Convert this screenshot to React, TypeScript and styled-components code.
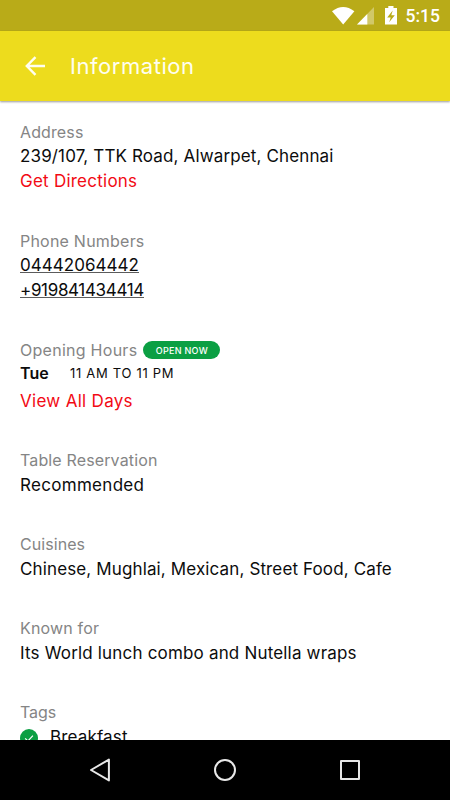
import React from 'react';
import styled, { createGlobalStyle } from 'styled-components';

const GlobalStyle = createGlobalStyle`
  * { box-sizing: border-box; }
  body { margin: 0; background: #fff; overflow: hidden; }
`;

const Screen = styled.div`
  width: 450px;
  height: 800px;
  display: flex;
  flex-direction: column;
  overflow: hidden;
  background: #fff;
  font-family: Inter, 'Liberation Sans', sans-serif;
`;

const StatusBar = styled.header`
  flex: 0 0 31px;
  display: flex;
  align-items: center;
  justify-content: flex-end;
  padding: 0 10px 0 0;
  background: #b9ab18;
  color: #fff;
`;

const StatusIcons = styled.svg`
  display: block;
  width: 66px;
  height: 31px;
  margin-right: 8px;
`;

const Clock = styled.span`
  font: 500 17.5px/29px Roboto, sans-serif;
  padding-top: 2px;
`;

const AppBar = styled.div`
  flex: 0 0 70px;
  display: flex;
  align-items: center;
  padding-left: 25px;
  background: #eddc1d;
  box-shadow: 0 1px 2px rgba(0, 0, 0, 0.4);
  z-index: 1;
`;

const BackIcon = styled.svg`
  display: block;
  width: 21px;
  height: 20px;
  margin-right: 24px;
`;

const Title = styled.h1`
  margin: 0;
  color: #fffef0;
  font-size: 22px;
  font-weight: 400;
  letter-spacing: 0.55px;
`;

const Content = styled.main`
  flex: 1;
  min-height: 0;
  overflow: hidden;
  display: flex;
  flex-direction: column;
  gap: 35px;
  padding: 19px 20px 0;
`;

const Section = styled.section`
  flex: none;
  display: flex;
  flex-direction: column;
  align-items: flex-start;
`;

const Details = styled.div`
  flex: none;
  display: flex;
  flex-direction: column;
  gap: 34px;
  margin-top: -1px;

  ${Section} {
    gap: 1px;
  }
`;

const Label = styled.h2<{ $track?: number }>`
  margin: 0;
  color: #858585;
  font-size: 16px;
  font-weight: 400;
  line-height: 24px;
  letter-spacing: ${(p) => p.$track ?? 0.12}px;
  white-space: nowrap;
`;

const Value = styled.div<{ $track?: number }>`
  color: #0c0c0c;
  font-size: 17px;
  font-weight: 400;
  line-height: 25px;
  letter-spacing: ${(p) => p.$track ?? 0.18}px;
  white-space: nowrap;
`;

const Action = styled(Value)`
  color: #f20a14;
`;

const PhoneLink = styled(Value)`
  height: 25px;
  display: flex;
  flex-direction: column;

  &::after {
    content: '';
    height: 1px;
    margin-top: -6px;
    background: #5c5c5c;
  }
`;

const LabelRow = styled.div`
  display: flex;
  align-items: center;
  height: 24px;
  gap: 6px;
`;

const OpenBadge = styled.span`
  width: 77px;
  height: 18px;
  border-radius: 9px;
  background: #0b9f43;
  color: #fff;
  font-size: 9px;
  font-weight: 500;
  line-height: 19px;
  letter-spacing: 0.28px;
  text-align: center;
`;

const HoursRow = styled.div`
  display: flex;
  align-items: center;
  height: 22px;
  margin-bottom: 5px;
  color: #0c0c0c;
  white-space: nowrap;
`;

const Day = styled.span`
  width: 50px;
  font-size: 16px;
  font-weight: 600;
`;

const Hours = styled.span`
  font-size: 13px;
  letter-spacing: 0.7px;
`;

const TagRow = styled.div`
  display: flex;
  align-items: center;
  gap: 12px;
`;

const CheckIcon = styled.svg`
  display: block;
  width: 18px;
  height: 18px;
`;

const NavBar = styled.nav`
  flex: 0 0 60px;
  display: flex;
  align-items: center;
  justify-content: center;
  gap: 101px;
  background: #000;
`;

const NavIcon = styled.svg`
  display: block;
  width: 24px;
  height: 24px;
  fill: none;
  stroke: #e8e8e8;
  stroke-width: 2;
  stroke-linejoin: round;
`;

export default function App() {
  return (
    <Screen>
      <GlobalStyle />
      <StatusBar>
        <StatusIcons viewBox="0 0 66 31" fill="#fff">
          <path d="M0 11.2Q11.2 2.6 22.4 11.2L11.2 24.5Z" />
          <path d="M42 7V24.5H25Z" opacity=".35" />
          <path d="M35.3 14V24.5H25Z" />
          <path d="M56.3 6H61.5V8H65V24.5H53V8H56.3ZM60.7 10.5L55.2 17.5H58.7L57.2 22.3L62.8 15.3H59.3Z" fillRule="evenodd" />
        </StatusIcons>
        <Clock>5:15</Clock>
      </StatusBar>
      <AppBar>
        <BackIcon viewBox="0 0 21 20" fill="none" stroke="#fffef0" strokeWidth="2.4">
          <path d="M10.5 1.2L1.8 10L10.5 18.8M2 10H20" />
        </BackIcon>
        <Title>Information</Title>
      </AppBar>
      <Content>
        <Section>
          <Label>Address</Label>
          <Value $track={0.14}>239/107, TTK Road, Alwarpet, Chennai</Value>
          <Action $track={0.24}>Get Directions</Action>
        </Section>
        <Section>
          <Label $track={0.22}>Phone Numbers</Label>
          <PhoneLink $track={0.02}>04442064442</PhoneLink>
          <PhoneLink $track={-0.34}>+919841434414</PhoneLink>
        </Section>
        <Section>
          <LabelRow>
            <Label $track={0.27}>Opening Hours</Label>
            <OpenBadge>OPEN NOW</OpenBadge>
          </LabelRow>
          <HoursRow>
            <Day>Tue</Day>
            <Hours>11 AM TO 11 PM</Hours>
          </HoursRow>
          <Action $track={0.3}>View All Days</Action>
        </Section>
        <Details>
          <Section>
            <Label $track={0.14}>Table Reservation</Label>
            <Value $track={0.3}>Recommended</Value>
          </Section>
          <Section>
            <Label $track={0.06}>Cuisines</Label>
            <Value $track={0.13}>Chinese, Mughlai, Mexican, Street Food, Cafe</Value>
          </Section>
          <Section>
            <Label $track={0.16}>Known for</Label>
            <Value $track={0.18}>Its World lunch combo and Nutella wraps</Value>
          </Section>
          <Section>
            <Label $track={-0.1}>Tags</Label>
            <TagRow>
              <CheckIcon viewBox="0 0 18 18">
                <circle cx="9" cy="9" r="9" fill="#0b9f43" />
                <path d="M5.2 9.4L7.9 12L12.9 6.6" fill="none" stroke="#fff" strokeWidth="1.2" />
              </CheckIcon>
              <Value $track={0.15}>Breakfast</Value>
            </TagRow>
          </Section>
        </Details>
      </Content>
      <NavBar>
        <NavIcon viewBox="0 0 24 24">
          <path d="M20.9 1.6V22.4L3 12Z" />
        </NavIcon>
        <NavIcon viewBox="0 0 24 24">
          <circle cx="12" cy="12" r="10" />
        </NavIcon>
        <NavIcon viewBox="0 0 24 24">
          <rect x="3" y="3" width="18" height="18" />
        </NavIcon>
      </NavBar>
    </Screen>
  );
}
